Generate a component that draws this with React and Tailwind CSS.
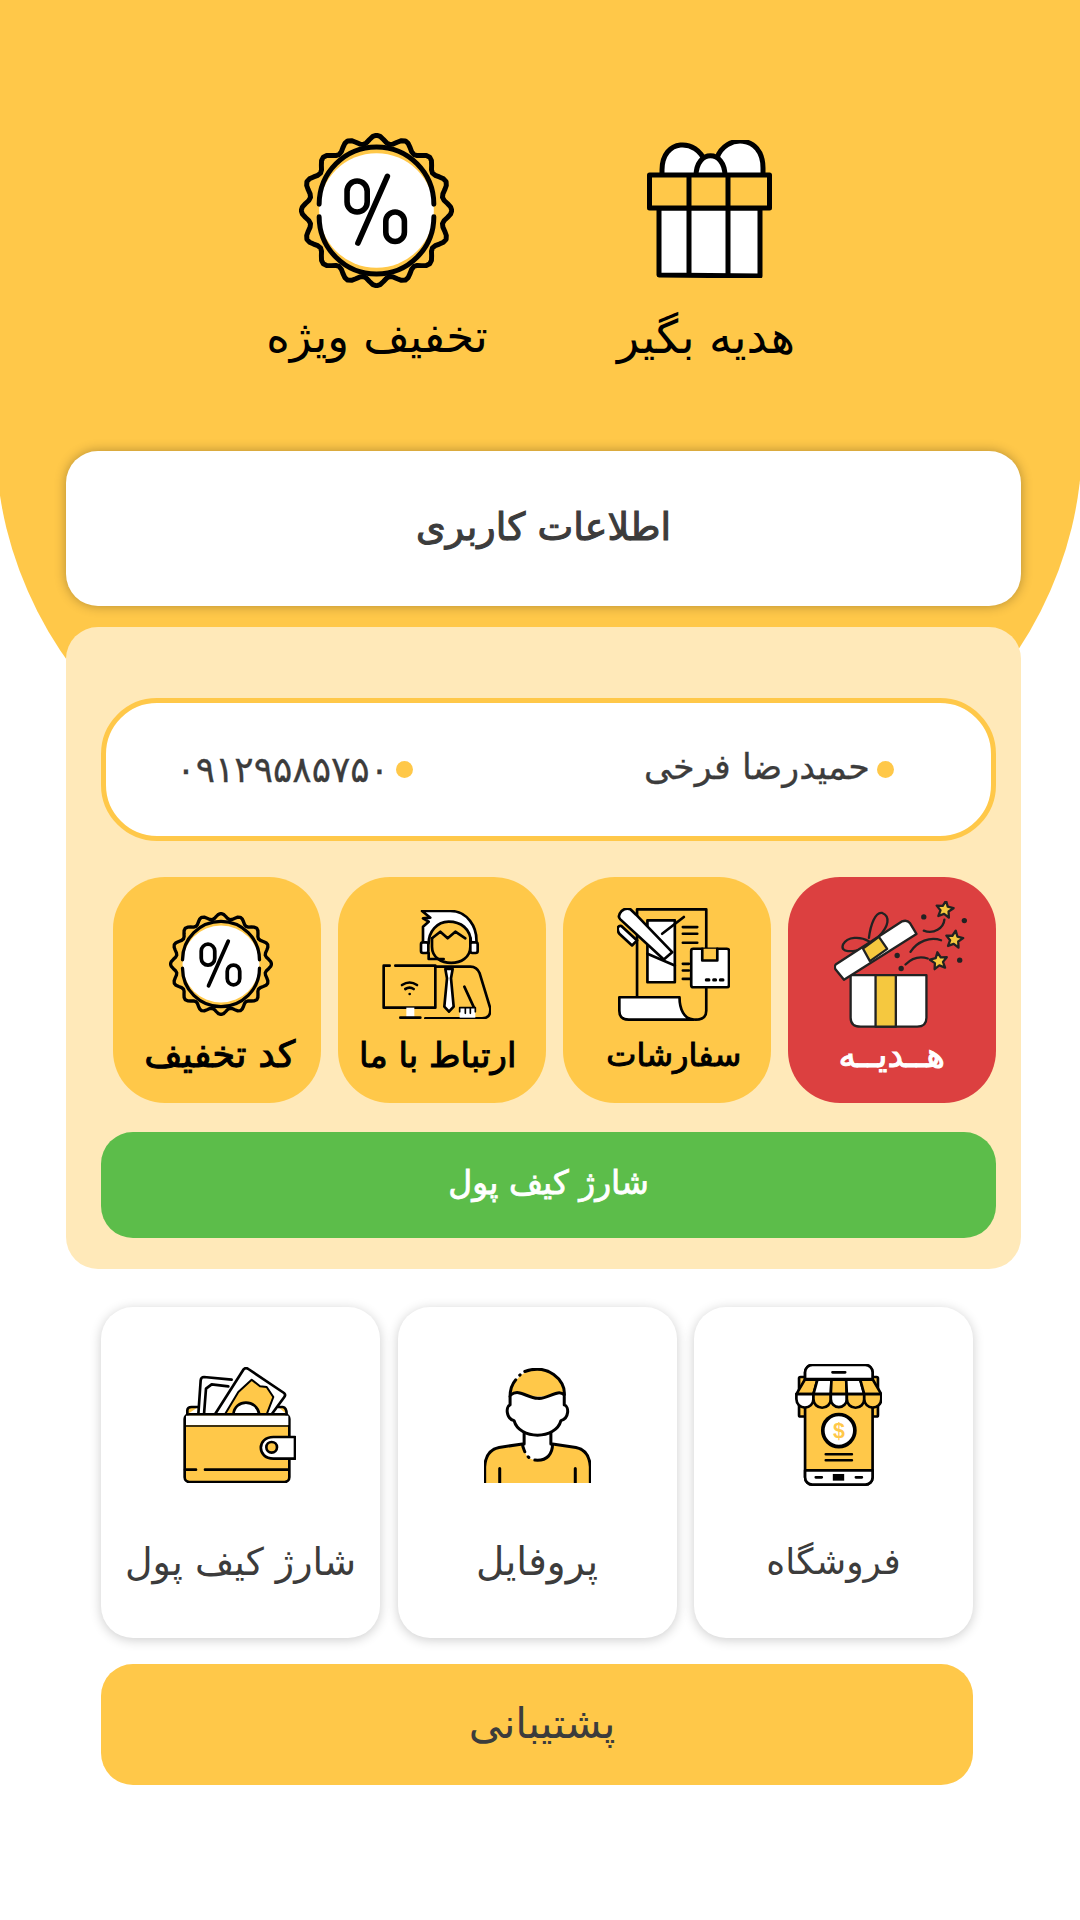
import React from "react";

const FONT = "font-['DejaVu_Sans','Noto_Sans',sans-serif]";
const Y = "#ffc849";
const GOLD = "#f5c83f";
const INK = "#222";

// scalloped badge outline around the circle
const badgePath = (() => {
  const n = 16;
  let d = "";
  for (let i = 0; i <= n * 8; i++) {
    const a = (i / (n * 8)) * Math.PI * 2;
    const r = 46 + 2.6 * Math.cos(a * n);
    const x = 50 + r * Math.sin(a);
    const y = 50 - r * Math.cos(a);
    d += (i ? "L" : "M") + x.toFixed(2) + " " + y.toFixed(2);
  }
  return d + "Z";
})();

const starPath = (cx, cy, R, rot) => {
  let d = "";
  for (let i = 0; i < 10; i++) {
    const r = i % 2 ? R * 0.48 : R;
    const a = rot + (i * Math.PI) / 5;
    d += (i ? "L" : "M") + (cx + r * Math.sin(a)).toFixed(1) + " " + (cy - r * Math.cos(a)).toFixed(1);
  }
  return d + "Z";
};

const BadgeIcon = ({ className }) => (
  <svg viewBox="0 0 100 100" className={className} fill="none" stroke="#000" strokeLinecap="round" strokeLinejoin="round">
    <path d={badgePath} strokeWidth="3.2" />
    <circle cx="50" cy="50" r="37" fill="#fff" stroke="none" />
    <path d="M13 46A37 37 0 0 1 87 46M87 54A37 37 0 0 1 13 54" strokeWidth="3.2" />
    <path d="M57 28L38 71" strokeWidth="3.6" />
    <rect x="31" y="31" width="13" height="20" rx="6.5" strokeWidth="3.6" />
    <rect x="56" y="51" width="12" height="19" rx="6" strokeWidth="3.6" />
  </svg>
);

const BigGift = ({ className }) => (
  <svg viewBox="0 0 125 138" className={className} fill="none" stroke="#000" strokeWidth="5" strokeLinejoin="round">
    <path d="M15 36V30C15 -2 50 -2 58 22C62 30 65 30 70 18C78 -6 116 -6 116 28V36Z" fill="#fff" />
    <path d="M49 36C49 9 78 9 78 36Z" fill="#fff" />
    <path d="M12 68H113V136L12 135Z" fill="#fff" />
    <path d="M2.5 35H122.5V68H2.5Z" fill={Y} />
    <path d="M42 35V135M81 35V136" />
  </svg>
);

const OpenGift = ({ className }) => (
  <svg viewBox="850 90 400 380" className={className} fill="none" stroke={INK} strokeWidth="7" strokeLinecap="round" strokeLinejoin="round">
    <path d="M900 312H1128V440Q1128 467 1100 467H930Q900 467 900 440Z" fill="#fff" />
    <path d="M975 312H1036V467H975Z" fill={GOLD} />
    <path d="M955 210C930 195 890 195 877 220C868 245 905 243 940 232" />
    <path d="M955 200C960 160 975 120 995 125C1020 135 1015 165 985 195" />
    <path d="M855 280L1055 150Q1070 145 1078 155L1098 188L880 326L855 295Q850 288 855 280Z" fill="#fff" />
    <path d="M937 232L985 197L1010 233L958 270Z" fill={GOLD} />
    <path d="M1120 178C1150 190 1180 170 1182 145M1080 242C1100 210 1140 195 1172 207M1065 280C1085 260 1110 255 1132 262" />
    <g fill={INK} stroke="none">
      <circle cx="1120" cy="137" r="8" />
      <circle cx="1242" cy="148" r="8" />
      <circle cx="1228" cy="267" r="8" />
      <circle cx="1040" cy="253" r="8" />
      <circle cx="1052" cy="292" r="8" />
    </g>
    <path d={starPath(1183, 115, 27, 0.15)} fill={GOLD} />
    <path d={starPath(1212, 205, 27, 0.15)} fill={GOLD} />
    <path d={starPath(1165, 270, 27, -0.15)} fill={GOLD} />
  </svg>
);

const OrdersIcon = ({ className }) => (
  <svg viewBox="205 118 338 338" className={className} fill="none" stroke="#000" strokeWidth="8" strokeLinecap="round" strokeLinejoin="round">
    <path d="M265 122H472V425Q472 452 440 452M265 122V385" />
    <path d="M212 385H392C392 420 405 450 435 452H240Q212 452 212 425Z" fill="#fff" />
    <path d="M296 155H378V340H296Z" fill="#fff" />
    <path d="M296 255L378 290" />
    <path d="M340 195L405 145" />
    <path d="M402 175H445M402 195H445M402 222H445M402 285H420M402 305H420M402 330H425" />
    <path d="M245 122Q232 115 218 128Q205 142 215 152L345 272L370 250L262 138Z" fill="#fff" />
    <path d="M208 175Q212 170 218 172L265 215L250 230L212 195Q205 185 208 175Z" fill="#fff" />
    <rect x="427" y="240" width="113" height="115" rx="6" fill="#fff" />
    <path d="M460 240V275H505V240" fill={Y} />
    <path d="M472 333H480M494 333H500M514 333H522" strokeWidth="9" />
  </svg>
);

const AgentIcon = ({ className }) => (
  <svg viewBox="845 115 327 327" className={className} fill="none" stroke="#000" strokeWidth="8" strokeLinecap="round" strokeLinejoin="round">
    <path d="M965 118H1050C1100 118 1132 165 1128 215H1112C1112 170 1080 150 1045 150C1010 150 985 180 985 215H968V165L985 150L968 140L990 138Z" fill="#fff" />
    <path d="M995 200L1020 180L1042 200L1065 180L1095 200" />
    <path d="M995 200V225C995 290 1110 290 1110 225V200" />
    <rect x="962" y="212" width="22" height="32" rx="6" fill="#fff" />
    <rect x="1110" y="212" width="22" height="32" rx="6" fill="#fff" />
    <path d="M985 244V262H1030" />
    <path d="M885 282H1005V408H850V282H868" />
    <path d="M918 408H942V436H918Z" fill="#fff" stroke="none" />
    <path d="M900 438H960" />
    <path d="M905 340Q928 325 950 340M915 352Q928 344 940 352" />
    <circle cx="928" cy="367" r="4" fill="#000" stroke="none" />
    <path d="M1005 285H1110Q1130 285 1138 305L1170 410Q1172 440 1145 440H975" />
    <path d="M1035 292H1057L1052 320L1060 405L1046 420L1032 405L1040 320Z" fill="#fff" />
    <path d="M1092 345L1122 410" />
    <path d="M1078 408H1125V438H1078Z" fill="#fff" stroke="none" />
    <path d="M1078 420V408H1125V420M1095 408V425M1110 408V425" strokeWidth="5" />
  </svg>
);

const WalletIcon = ({ className }) => (
  <svg viewBox="250 200 337 348" className={className} fill="none" stroke="#000" strokeWidth="8" strokeLinecap="round" strokeLinejoin="round">
    <path d="M262 342V330Q262 320 275 320H295M535 320H548Q560 322 560 342" fill={Y} />
    <path d="M295 342L302 240Q303 230 312 230L395 238L350 342Z" fill="#fff" stroke="none" />
    <path d="M295 342L302 240Q303 230 312 230L395 238M312 342L318 265L335 252L385 258" />
    <path d="M345 342L430 208Q437 200 445 206L552 278Q558 283 553 290L515 342Z" fill="#fff" />
    <path d="M375 342L415 275L455 238L480 258L500 260L520 290L500 342Z" fill={Y} strokeWidth="6" />
    <path d="M400 342C405 295 470 295 478 342Z" fill="#fff" />
    <rect x="254" y="342" width="314" height="203" rx="14" fill={Y} />
    <path d="M258 346H565V374H258Z" fill="#fff" stroke="none" />
    <path d="M258 377H565" strokeWidth="5" />
    <path d="M585 410H520C470 410 470 475 520 475H585Z" fill="#fff" />
    <circle cx="515" cy="441" r="16" fill={Y} />
    <path d="M255 508H288M315 508H565" />
  </svg>
);

const ProfileIcon = ({ className }) => (
  <svg viewBox="1150 205 320 343" className={className} fill="none" stroke="#000" strokeWidth="9" strokeLinecap="round" strokeLinejoin="round">
    <path d="M1230 285C1235 240 1270 208 1310 208C1360 208 1392 250 1390 285C1370 265 1340 300 1310 295C1280 295 1255 265 1230 285Z" fill={Y} stroke="none" />
    <path d="M1272 215C1340 190 1395 240 1390 285M1257 226L1258 225M1245 240C1232 255 1228 270 1228 290" />
    <path d="M1228 290V315C1215 320 1215 355 1240 362C1255 420 1365 420 1380 362C1405 355 1405 320 1390 315V290" fill="#fff" />
    <path d="M1230 285C1255 265 1280 295 1310 295C1340 300 1370 265 1390 285" />
    <path d="M1152 552V500Q1155 450 1195 442L1265 430C1270 470 1290 480 1310 480C1340 480 1355 460 1355 430L1425 442Q1465 450 1468 500V552Z" fill={Y} stroke="none" />
    <path d="M1152 552V500Q1155 450 1195 442L1265 432C1265 440 1270 450 1272 455M1282 470L1284 472M1302 480C1340 484 1355 460 1355 432L1425 442Q1465 450 1468 500V552" />
    <path d="M1270 400V432M1350 400V432" />
    <path d="M1197 505V548M1423 505V548" />
  </svg>
);

const ShopIcon = ({ className }) => (
  <svg viewBox="285 195 260 365" className={className} fill="none" stroke="#000" strokeWidth="8" strokeLinecap="round" strokeLinejoin="round">
    <rect x="297" y="234" width="236" height="118" rx="4" fill={Y} />
    <rect x="315" y="198" width="202" height="358" rx="22" fill={Y} />
    <path d="M315 240V220A22 22 0 0 1 337 198H495A22 22 0 0 1 517 220V240Z" fill="#fff" />
    <path d="M315 513H517V534A22 22 0 0 1 495 556H337A22 22 0 0 1 315 534Z" fill="#fff" />
    <path d="M397 220H435M347 534H365M467 534H485" />
    <rect x="398" y="524" width="34" height="20" fill="#000" stroke="none" />
    <path d="M314 242L352 242L340 285H289Z" fill={Y} />
    <path d="M352 242H394L392 285H340Z" fill="#fff" />
    <path d="M394 242H438L440 285H392Z" fill={Y} />
    <path d="M438 242H480L492 285H440Z" fill="#fff" />
    <path d="M480 242H518L543 285H492Z" fill={Y} />
    <path d="M289 285H340V300A25 25 0 0 1 289 300Z" fill="#fff" />
    <path d="M340 285H392V300A26 26 0 0 1 340 300Z" fill={Y} />
    <path d="M392 285H440V300A24 24 0 0 1 392 300Z" fill="#fff" />
    <path d="M440 285H492V300A26 26 0 0 1 440 300Z" fill={Y} />
    <path d="M492 285H543V300A25 25 0 0 1 492 300Z" fill={Y} />
    <circle cx="416" cy="394" r="48" fill="#fff" strokeWidth="11" />
    <text x="416" y="417" textAnchor="middle" fontSize="64" fontWeight="700" fill={Y} stroke="none" fontFamily="Liberation Sans">$</text>
    <path d="M377 465H455M377 483H455" />
  </svg>
);

const Tile = ({ label, labelClass, red, icon }) => (
  <div className={`h-[226px] w-[208.5px] rounded-[52px] flex flex-col items-center ${red ? "bg-[#dc4040]" : "bg-[#ffc849]"}`}>
    <div className="mt-[16px] h-[142px] w-full flex items-center justify-center">{icon}</div>
    <span className={`leading-[40px] [-webkit-text-stroke:1px_currentColor] whitespace-nowrap ${labelClass} ${red ? "text-white" : "text-black"}`}>{label}</span>
  </div>
);

const Card = ({ label, labelClass, icon }) => (
  <div className="h-[331px] w-[279px] rounded-[32px] bg-white shadow-[0_2px_12px_rgba(0,0,0,0.2)] flex flex-col items-center">
    <div className="mt-[56px] h-[124px] w-full flex items-center justify-center">{icon}</div>
    <span className={`mt-[50px] leading-[50px] text-[#3c3c3c] whitespace-nowrap ${labelClass}`}>{label}</span>
  </div>
);

export default function App() {
  return (
    <div dir="rtl" className={`relative h-[1920px] w-[1080px] overflow-hidden bg-white ${FONT}`}>
      {/* yellow backdrop */}
      <div className="absolute top-0 left-[-4px] h-[884px] w-[1086px] bg-[#ffc849] rounded-b-[50%]" />

      <div className="relative flex flex-col">
        {/* top icons */}
        <div className="h-[451px] pt-[133px] pr-[244px] flex">
          <div className="w-[260px] flex flex-col items-center">
            <BigGift className="mt-[7px] h-[138px] w-[125px] translate-x-[3px]" />
            <span className="mt-[29px] text-[46px] leading-[60px] text-black whitespace-nowrap">هدیه بگیر</span>
          </div>
          <div className="mr-[64px] w-[270px] flex flex-col items-center">
            <BadgeIcon className="h-[155px] w-[155px] -translate-x-[1px]" />
            <span className="mt-[19px] text-[45px] leading-[60px] text-black whitespace-nowrap">تخفیف ویژه</span>
          </div>
        </div>

        <div className="mr-[59px] ml-[66px] h-[155px] rounded-[32px] bg-white shadow-[0_0_12px_rgba(0,0,0,0.3)] flex items-center justify-center">
          <span className="pb-[3px] text-[38px] [-webkit-text-stroke:1.1px_currentColor] text-[#3c3c3c]">اطلاعات کاربری</span>
        </div>

        <div className="mt-[21px] mr-[59px] ml-[66px] h-[642px] rounded-[32px] bg-[#ffe9b9] pt-[71px] pr-[25px] pl-[35px]">
          <div className="h-[143px] rounded-[56px] border-[5px] border-[#ffc849] bg-white flex items-center">
            <span className="mr-[97px] size-[17px] rounded-full bg-[#ffc849]" />
            <span className="mr-[7px] w-[457px] -mt-[4px] text-[35px] text-[#3c3c3c] whitespace-nowrap [-webkit-text-stroke:0.3px_currentColor]">حمیدرضا فرخی</span>
            <span className="size-[17px] rounded-full bg-[#ffc849]" />
            <span className="mr-[7px] text-[36px] text-[#3c3c3c] whitespace-nowrap [-webkit-text-stroke:0.3px_currentColor]">۰۹۱۲۹۵۸۵۷۵۰</span>
          </div>

          <div className="mt-[36px] flex gap-[16.5px]">
            <Tile red label="هــدیــه" labelClass="text-[35px]" icon={<OpenGift className="h-[127px] w-[133px] translate-x-[9px]" />} />
            <Tile label="سفارشات" labelClass="text-[32px] translate-x-[7px]" icon={<OrdersIcon className="h-[113px] w-[113px] translate-x-[7px]" />} />
            <Tile label="ارتباط با ما" labelClass="text-[34px] -translate-x-[4px]" icon={<AgentIcon className="h-[109px] w-[109px] -translate-x-[5px]" />} />
            <Tile label="کد تخفیف" labelClass="text-[37px] translate-x-[3px]" icon={<BadgeIcon className="h-[104px] w-[104px] translate-x-[4px]" />} />
          </div>

          <div className="mt-[29px] h-[106px] rounded-[32px] bg-[#5cbd4a] flex items-center justify-center">
            <span className="pb-[5px] text-[33px] [-webkit-text-stroke:0.8px_currentColor] text-white">شارژ کیف پول</span>
          </div>
        </div>

        <div className="mt-[38px] mr-[107px] flex gap-[17.5px]">
          <Card label="فروشگاه" labelClass="text-[36px]" icon={<ShopIcon className="h-[122px] w-[87px] translate-x-[5px]" />} />
          <Card label="پروفایل" labelClass="text-[39px]" icon={<ProfileIcon className="h-[115px] w-[107px]" />} />
          <Card label="شارژ کیف پول" labelClass="text-[38px]" icon={<WalletIcon className="h-[116px] w-[113px] -translate-x-[1px]" />} />
        </div>

        <div className="mt-[26px] mr-[107px] w-[872px] h-[121px] rounded-[32px] bg-[#ffc849] flex items-center justify-center">
          <span className="pb-[3px] translate-x-[5px] text-[42px] text-[#3c3c3c]">پشتیبانی</span>
        </div>
      </div>
    </div>
  );
}
